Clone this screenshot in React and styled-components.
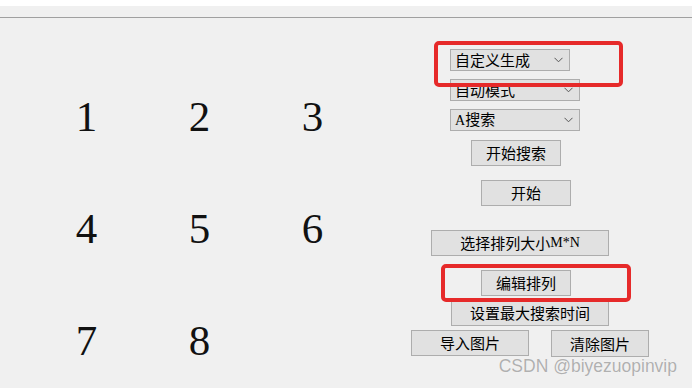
import React from "react";
import styled, { createGlobalStyle } from "styled-components";

const Global = createGlobalStyle`
  html, body { margin: 0; padding: 0; background: #f0f0f0; }
  body { width: 692px; height: 388px; overflow: hidden; font-family: "Noto Sans CJK SC", "Noto Sans", sans-serif; }
`;

const Window = styled.div`
  position: relative;
  width: 692px;
  height: 388px;
  background: #f0f0f0;
  overflow: hidden;
`;

const TopStrip = styled.div`
  height: 6px;
  background: #ffffff;
`;

const MenuArea = styled.div`
  height: 11px;
  background: #f0f0f0;
  border-bottom: 1px solid #a0a0a0;
`;

const Main = styled.div`
  display: flex;
  padding-left: 30px;
`;

const NumberGrid = styled.div`
  display: grid;
  grid-template-columns: repeat(3, 113px);
  grid-auto-rows: 112px;
  margin-top: 43px;
  width: 339px;
`;

const Cell = styled.div`
  display: flex;
  align-items: center;
  justify-content: center;
  font-family: "Liberation Serif", "DejaVu Serif", serif;
  font-size: 43px;
  line-height: 112px;
  color: #111;
`;

const Panel = styled.div`
  position: relative;
  margin-left: 42px;
  padding-top: 31px;
  display: flex;
  flex-direction: column;
  align-items: flex-start;
`;

const Combo = styled.div`
  box-sizing: border-box;
  display: flex;
  align-items: center;
  justify-content: space-between;
  width: ${(p) => p.$w}px;
  height: 22px;
  margin-left: ${(p) => p.$indent}px;
  margin-top: ${(p) => p.$top || 0}px;
  padding: 0 6px 0 4px;
  background: #e1e1e1;
  border: 1px solid #adadad;
  font-size: 15px;
  color: #000;
  line-height: 20px;
`;

const Latin = styled.span`
  font-family: "Liberation Serif", serif;
  font-size: 14px;
`;

const Chevron = () => (
  <svg width="9" height="6" viewBox="0 0 9 6">
    <path d="M0.5 0.8 L4.5 4.8 L8.5 0.8" fill="none" stroke="#555" strokeWidth="1" />
  </svg>
);

const Button = styled.div`
  box-sizing: border-box;
  display: flex;
  align-items: center;
  justify-content: center;
  width: ${(p) => p.$w}px;
  height: ${(p) => p.$h || 26}px;
  margin-left: ${(p) => p.$indent || 0}px;
  margin-top: ${(p) => p.$top || 0}px;
  background: #e1e1e1;
  border: 1px solid #adadad;
  font-size: 15px;
  color: #000;
  line-height: 20px;
  flex-shrink: 0;
`;

const ButtonRow = styled.div`
  display: flex;
  gap: 22px;
  margin-top: 4px;
`;

const RedMark = styled.div`
  position: absolute;
  left: ${(p) => p.$x}px;
  top: ${(p) => p.$y}px;
  width: ${(p) => p.$w}px;
  height: ${(p) => p.$h}px;
  box-sizing: border-box;
  border: 4px solid #e62a2a;
  border-radius: 5px;
  pointer-events: none;
`;

const Watermark = styled.div`
  position: absolute;
  right: 15px;
  bottom: 12px;
  font-family: "Liberation Sans", Arial, sans-serif;
  font-size: 17.5px;
  line-height: 20px;
  color: #b0b0b0;
  text-shadow: 0 0 1px #ffffff;
  white-space: nowrap;
`;

const numbers = ["1", "2", "3", "4", "5", "6", "7", "8"];

export default function App() {
  return (
    <Window>
      <Global />
      <TopStrip />
      <MenuArea />
      <Main>
        <NumberGrid>
          {numbers.map((n) => (
            <Cell key={n}>{n}</Cell>
          ))}
        </NumberGrid>
        <Panel>
          <Combo $w={120} $indent={39}>
            <span>自定义生成</span>
            <Chevron />
          </Combo>
          <Combo $w={130} $indent={39} $top={8}>
            <span>自动模式</span>
            <Chevron />
          </Combo>
          <Combo $w={130} $indent={39} $top={8}>
            <span><Latin>A</Latin>搜索</span>
            <Chevron />
          </Combo>
          <Button $w={90} $indent={60} $top={9}>开始搜索</Button>
          <Button $w={90} $indent={70} $top={14}>开始</Button>
          <Button $w={178} $indent={20} $top={24}>
            选择排列大小<Latin>M*N</Latin>
          </Button>
          <Button $w={90} $indent={70} $top={14}>编辑排列</Button>
          <Button $w={158} $indent={40} $top={4}>设置最大搜索时间</Button>
          <ButtonRow>
            <Button $w={118}>导入图片</Button>
            <Button $w={98} $h={27}>清除图片</Button>
          </ButtonRow>
          <RedMark $x={23} $y={23} $w={189} $h={46} />
          <RedMark $x={30} $y={246} $w={190} $h={38} />
        </Panel>
      </Main>
      <Watermark>CSDN @biyezuopinvip</Watermark>
    </Window>
  );
}
